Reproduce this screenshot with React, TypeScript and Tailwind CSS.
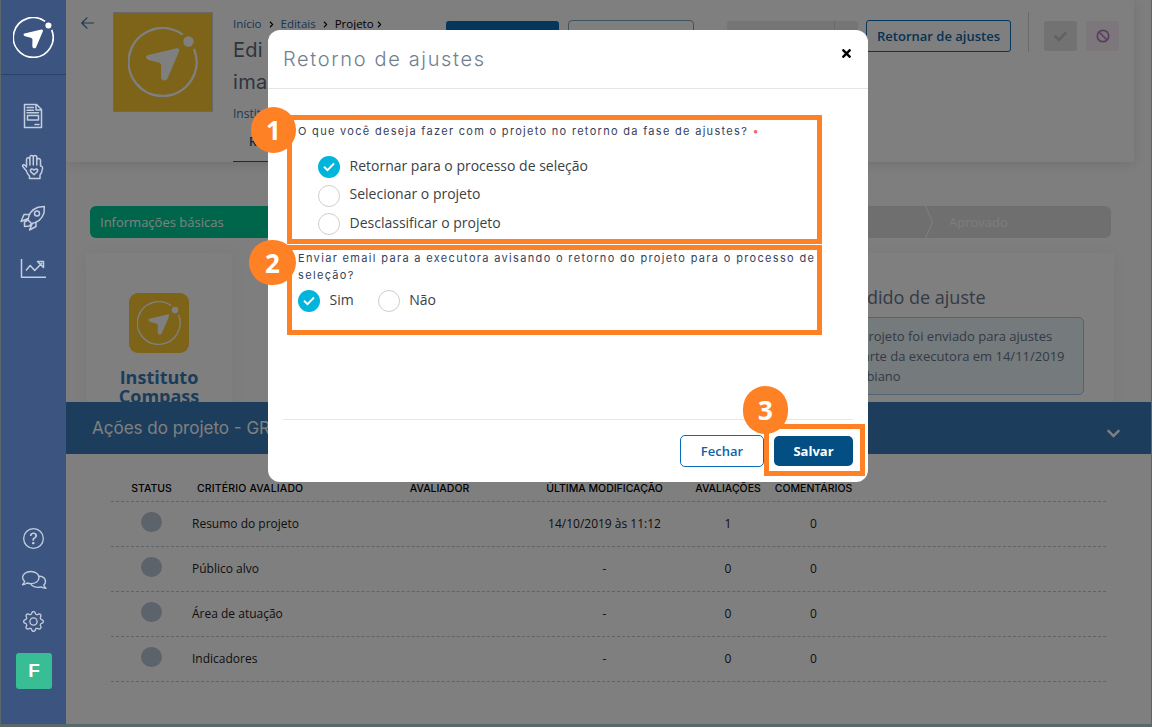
import React, { useState } from "react";
import { BsGear, BsQuestionCircle } from "react-icons/bs";
import { FaCheck, FaChevronDown, FaChevronRight, FaTimes } from "react-icons/fa";

const criteria = [
  { name: "Resumo do projeto", date: "14/10/2019 às 11:12", reviews: 1, comments: 0 },
  { name: "Público alvo", date: "-", reviews: 0, comments: 0 },
  { name: "Área de atuação", date: "-", reviews: 0, comments: 0 },
  { name: "Indicadores", date: "-", reviews: 0, comments: 0 },
];

const returnOptions = [
  "Retornar para o processo de seleção",
  "Selecionar o projeto",
  "Desclassificar o projeto",
];

const CompassLogo = ({ className, strokeWidth = 2.4 }: { className: string; strokeWidth?: number }) => (
  <svg viewBox="0 0 70 70" className={className} fill="none">
    <path d="M54.7 7.6A34 34 0 1 0 66 22" stroke="currentColor" strokeWidth={strokeWidth} />
    <circle cx="60.5" cy="14.5" r="5.2" fill="currentColor" />
    <path
      d="M19.5 28.2 48.5 21.3Q52 21 51 24.5L39.5 51.5Q38 54 35.5 53.4Q33 52.6 33 50L33.2 39Q33.3 36.4 30.5 35.6L20.5 33Q16 30 19.5 28.2Z"
      fill="currentColor"
    />
  </svg>
);

const iconProps = {
  fill: "none",
  stroke: "currentColor",
  strokeWidth: 1.5,
  strokeLinecap: "round" as const,
  strokeLinejoin: "round" as const,
};

const Sidebar = () => (
  <aside className="flex w-[65px] shrink-0 flex-col items-center bg-[#3b5580] text-[#c3cddd]">
    <div className="flex h-[75px] w-full items-center justify-center border-b border-[#29416b] pr-[3px]">
      <CompassLogo className="ml-[2px] h-[41px] w-[41px] text-white" strokeWidth={2.8} />
    </div>
    <nav className="flex flex-1 flex-col items-center pt-[28px] pr-[2px]">
      <svg viewBox="0 0 26 26" className="h-[26px] w-[26px]" {...iconProps}>
        <path d="M4.5 1.5h12l5 5v18h-17zM16 2v5h5M7 4.5h6.500M7 7.200h6.500M7 9.800h11.500M7.500 12.500h11v4.500h-11zM15 21.500h4" />
      </svg>
      <svg viewBox="0 0 26 26" className="mt-[25px] h-[26px] w-[26px]" {...iconProps}>
        <path d="M6.500 17 3 12.800Q2 11.300 3.500 10.700Q5 10.300 6.500 13V5.500Q6.700 3.700 8.200 3.700T9.900 5.500V11V3Q10 1.500 11.600 1.500T13.300 3V11V3Q13.500 1.500 15 1.500T16.800 3V11V6Q17 4.500 18.500 4.500T20.500 6V12Q22.800 12 22.500 14.500Q22 19 20 21V24.500H9.500V22Q7 20 6.500 17M14 20.800l-3.300-3.200Q9.800 16 11.500 15Q13 14.600 14 16.200Q15 14.600 16.700 15Q18.300 16 17.300 17.600z" />
      </svg>
      <svg viewBox="0 0 26 26" className="mt-[25px] h-[26px] w-[26px]" {...iconProps}>
        <path d="M8 15Q9 5.500 18 2.200L24.300 1.500 24 8Q21 17 11.500 18.500zM9 9.500H4L1 16.500 7.500 13.800M16 17V21.500L9.500 25 12.300 18.500M8 15l-3.500 2v4.500L9.500 21l2-2.500" />
        <circle cx="17" cy="8.500" r="2.500" />
      </svg>
      <svg viewBox="0 0 26 20" className="mt-[28px] h-[20px] w-[26px]" {...iconProps} strokeLinecap="butt">
        <path d="M1.500 0v18.200H26M6 11.500l4.200-5 4.500 5L22 4M17.500 2.500h6v6z" />
      </svg>
    </nav>
    <div className="flex flex-col items-center pb-[35px]">
      <BsQuestionCircle className="h-[21px] w-[21px]" />
      <svg viewBox="0 0 26 22" className="mt-[20px] h-[22px] w-[26px]" {...iconProps} strokeWidth={1.400}>
        <path d="M9.800 2.500C14.500 2.500 18 5 18 8.600S14.500 14.600 9.800 14.600C8.500 14.600 7.300 14.400 6.200 14Q4 15.600 1.500 15.700Q3.300 14 3.600 12.300C2.300 11.300 1.600 10 1.600 8.600C1.600 5 5.100 2.500 9.800 2.500ZM18 7C21.800 7.500 24.500 9.500 24.500 12.600Q24.500 14.500 22.800 16Q23.300 18 25 19.400Q22 19.200 20 17.900C15.500 19.200 11.300 17.700 9.700 14.800" />
      </svg>
      <BsGear className="mt-[20px] h-[21px] w-[21px]" />
      <div className="mt-[21px] mr-[-1px] flex h-9 w-9 items-center justify-center rounded-[3px] bg-[#39bd95] font-['Liberation_Sans'] text-[19px] font-bold text-white">
        F
      </div>
    </div>
  </aside>
);

const ProjectHeader = () => (
  <header className="flex h-[162px] w-[1068px] bg-white pl-[15px] pr-[15px] shadow-[0_2px_12px_rgba(0,0,0,0.12)]">
    <svg viewBox="0 0 13 12" className="mt-[17px] h-3 w-[13px] text-[#3a6ea8]" {...iconProps} strokeWidth={1.200}>
      <path d="M12.500 6H.8M6 .8.800 6 6 11.200" />
    </svg>
    <div className="mt-3 ml-[19px] flex h-[100px] w-[100px] shrink-0 items-center justify-center border border-[#d0d0d0] bg-[#fac832] text-white">
      <CompassLogo className="h-[70px] w-[70px]" />
    </div>
    <div className="ml-5 flex w-[213px] flex-col">
      <div className="mt-[16px] flex h-4 items-center gap-[7px] whitespace-nowrap text-[11.500px] text-[#2b6cb0]">
        <span>Início</span>
        <FaChevronRight className="h-[7px] w-[5px] text-black" />
        <span>Editais</span>
        <FaChevronRight className="h-[7px] w-[5px] text-black" />
        <span className="-mr-[4px] text-black">Projeto</span>
        <FaChevronRight className="h-[7px] w-[5px] text-black" />
      </div>
      <h1 className="mt-[2px] font-['Inter'] text-[20px] leading-8 tracking-[0.300px] text-[#5c6a80]">
        Edi
        <br />
        ima
      </h1>
      <p className="mt-[8px] text-[12px] leading-4 text-[#47729f]">Instit</p>
      <div className="mt-auto h-[30px] w-24 border-b border-[#0a64ad] pt-px pl-4 text-[12px] font-semibold text-[#0a5490]">
        R
      </div>
    </div>
    <div className="flex flex-1 items-start">
      <span className="mt-[21px] h-[30px] w-[113px] rounded-[3px] bg-[#0a6cb8]" />
      <span className="mt-5 ml-[9px] h-8 w-[126px] rounded-[4px] border border-[#7fa5bf]" />
      <span className="mt-[21px] ml-[33px] flex h-[30px] w-[131px] justify-end rounded-[3px] bg-[#eaeaea]">
        <span className="w-6 border-l border-[#d5d5d5]" />
      </span>
      <button className="mt-5 ml-2 h-8 w-[145px] rounded-[3px] border border-[#0a6cb8] pt-px text-[13px] font-semibold whitespace-nowrap text-[#0a64a8]">
        Retornar de ajustes
      </button>
      <span className="mt-3 ml-[17px] h-10 border-l border-[#d3d3dd]" />
      <span className="mt-[21px] ml-[15px] flex h-[30px] w-[33px] items-center justify-center rounded-[3px] bg-[#e4e4e4]">
        <FaCheck className="h-[13px] w-[13px] text-[#c4c4c4]" />
      </span>
      <span className="mt-[21px] ml-[9px] flex h-[30px] w-[33px] items-center justify-center rounded-[3px] bg-[#f6eff7] text-[#b57cc0]">
        <svg viewBox="0 0 14 14" className="h-[14px] w-[14px]" fill="none" stroke="currentColor" strokeWidth="1.700">
          <circle cx="7" cy="7" r="5.700" />
          <path d="M3 3l8 8" />
        </svg>
      </span>
    </div>
  </header>
);

const Stepper = () => (
  <div className="mt-11 ml-6 flex h-8 w-[1021px] overflow-hidden rounded-[6px] bg-[#dfdfdf] text-[13px] leading-8">
    <div className="w-[255px] bg-[#00cc96] pl-[10px] text-white">Informações básicas</div>
    <div className="flex-1" />
    <svg viewBox="0 0 8 32" className="h-8 w-2" fill="none" stroke="#fff">
      <path d="M.5 0l7 16-7 16" />
    </svg>
    <div className="w-[178px] pl-4 text-white/80">Aprovado</div>
  </div>
);

const Cards = () => (
  <div className="mt-[15px] flex justify-between pr-[37px] pl-5">
    <div className="flex h-[200px] w-[146px] flex-col items-center bg-[#fefefe] pt-10 shadow-[0_0_22px_rgba(0,0,0,0.05)]">
      <div className="flex h-[60px] w-[60px] items-center justify-center rounded-[9px] bg-[#fac832] text-white">
        <CompassLogo className="h-[44px] w-[44px]" strokeWidth={2.200} />
      </div>
      <p className="mt-[15px] text-center text-[18px] leading-[19px] font-bold text-[#367bb8]">
        Instituto
        <br />
        Compass
      </p>
    </div>
    <div className="h-[200px] w-[300px] bg-[#fefefe] pt-[32px] pr-[30px] shadow-[0_0_22px_rgba(0,0,0,0.05)]">
      <h2 className="pl-[32px] text-[18px] leading-[25px] text-[#68768c]">Pedido de ajuste</h2>
      <div className="mt-[7px] h-[78px] rounded-[5px] border border-[#a9c4ee] bg-[#eaf5f8] pt-[8px] text-[13px] leading-5 whitespace-nowrap text-[#68768c]">
        <p className="pl-[32px]">O projeto foi enviado para ajustes</p>
        <p className="pl-[15px]">por parte da executora em 14/11/2019</p>
        <p className="pl-[13px]">por Fabiano</p>
      </div>
    </div>
  </div>
);

const columns = "grid grid-cols-[81px_165px_165px_165px_82px_89px_1fr] items-center border-b border-dashed border-[#b7cad0] text-center";

const ActionsPanel = () => (
  <section className="relative h-[322px] bg-white">
    <div className="flex h-[52px] items-center justify-between bg-[#387ab8] pr-[30px] pl-[26px] text-white">
      <h2 className="pt-px font-['Inter'] text-[17px]">Ações do projeto - GR</h2>
      <FaChevronDown className="mt-[10px] h-[15px] w-[15px]" />
    </div>
    <div className="ml-[45px] w-[995px] text-[12px] text-[#222]">
      <div className={`${columns} h-12 pt-[22px] font-['Inter'] text-[10.500px] font-medium whitespace-nowrap text-black`}>
        <span>STATUS</span>
        <span className="pl-[5px] text-left tracking-[0.150px]">CRITÉRIO AVALIADO</span>
        <span>AVALIADOR</span>
        <span>ÚLTIMA MODIFICAÇÃO</span>
        <span>AVALIAÇÕES</span>
        <span>COMENTÁRIOS</span>
      </div>
      {criteria.map((c) => (
        <div key={c.name} className={`${columns} h-[45px]`}>
          <span className="mx-auto mb-[5px] h-5 w-[21px] rounded-full bg-[#b9c7d6]" />
          <span className="text-left">{c.name}</span>
          <span />
          <span>{c.date}</span>
          <span>{c.reviews}</span>
          <span>{c.comments}</span>
        </div>
      ))}
    </div>
  </section>
);

const Radio = ({
  label,
  checked,
  onSelect,
}: {
  label: string;
  checked: boolean;
  onSelect: () => void;
}) => (
  <button onClick={onSelect} className="flex h-[22px] items-center text-left">
    {checked ? (
      <span className="flex h-[22px] w-[22px] items-center justify-center rounded-full bg-[#00b5dc] text-white">
        <svg viewBox="0 0 12 10" className="h-[10px] w-3" fill="none" stroke="currentColor" strokeWidth="1.900">
          <path d="M1 4.800 4.500 8.200 11 1.500" />
        </svg>
      </span>
    ) : (
      <span className="h-[22px] w-[22px] rounded-full border border-[#cfcfc9] bg-white" />
    )}
    <span className="-mt-[3px] pl-[9.500px] text-[14px] leading-5 text-[#3b3f46]">{label}</span>
  </button>
);

const Marker = ({ number, className }: { number: number; className: string }) => (
  <span
    className={`absolute flex items-center justify-center rounded-full bg-[#ff8126] text-[26px] leading-none font-bold text-white ${className}`}
  >
    {number}
  </span>
);

const ReturnModal = () => {
  const [option, setOption] = useState(returnOptions[0]);
  const [sendEmail, setSendEmail] = useState(true);

  return (
    <div className="absolute top-[30px] left-[268px] flex h-[452px] w-[600px] flex-col rounded-xl bg-white">
      <div className="flex h-[59px] items-center justify-between border-b border-[#e5e5e5] pr-[15px] pl-[15px]">
        <h2 className="font-['Inter'] text-[20px] font-light tracking-[1.650px] text-[#6f8090]">
          Retorno de ajustes
        </h2>
        <FaTimes className="mt-[-12px] h-[13px] w-[13px] text-black" />
      </div>

      <div className="mt-[26px] ml-[19px] h-[129px] w-[535px] border-[5px] border-[#ff8126] pt-[3px] pl-[5px]">
        <p className="pl-px font-['Inter'] text-[11px] leading-4 tracking-[1.300px] whitespace-nowrap text-[#36425a]">
          O que você deseja fazer com o projeto no retorno da fase de ajustes?{" "}
          <span className="text-[#f06a6a]">•</span>
        </p>
        <div className="mt-[17px] ml-[21px] flex flex-col gap-[6.500px]">
          {returnOptions.map((o) => (
            <Radio key={o} label={o} checked={option === o} onSelect={() => setOption(o)} />
          ))}
        </div>
      </div>

      <div className="mt-px ml-[19px] h-[90px] w-[535px] border-[5px] border-[#ff8126] pl-[5px]">
        <p className="pl-px font-['Inter'] text-[11px] leading-[17px] tracking-[1.335px] whitespace-nowrap text-[#36425a]">
          Enviar email para a executora avisando o retorno do projeto para o processo de
          <br />
          seleção?
        </p>
        <div className="mt-[6px] ml-px flex gap-[24px]">
          <Radio label="Sim" checked={sendEmail} onSelect={() => setSendEmail(true)} />
          <Radio label="Não" checked={!sendEmail} onSelect={() => setSendEmail(false)} />
        </div>
      </div>

      <div className="mx-[15px] mt-auto flex h-[63px] justify-end border-t border-[#dce8f6]">
        <button className="mt-[15px] h-8 w-[84px] rounded-[5px] border border-[#0a6cb8] pt-[2px] text-[13px] font-semibold text-[#0a64ad]">
          Fechar
        </button>
        <div className="-mr-3 mt-1 h-[52px] w-[101px] border-[5px] border-[#ff8126] p-[5px] pt-[7px]">
          <button className="h-[30px] w-[79px] rounded-[5px] bg-[#034f84] pt-[2px] text-[13px] font-bold text-white">
            Salvar
          </button>
        </div>
      </div>

      <Marker number={1} className="top-[77px] -left-[17px] h-[46px] w-[45px]" />
      <Marker number={2} className="top-[210px] -left-[19px] h-[45px] w-[47px]" />
      <Marker number={3} className="top-[356px] left-[475px] h-[48px] w-[45px]" />
    </div>
  );
};

export default function App() {
  return (
    <div className="relative flex h-[727px] w-[1152px] overflow-hidden border-r border-b-[3px] border-l border-[#5b686b] font-['Open_Sans',sans-serif]">
      <Sidebar />
      <main className="relative w-[1085px] shrink-0 overflow-hidden bg-[#fdfdfd]">
        <div className="h-[402px] overflow-hidden">
          <ProjectHeader />
          <Stepper />
          <Cards />
        </div>
        <ActionsPanel />
        <div className="absolute inset-0 bg-black/50" />
      </main>
      <div className="absolute inset-y-0 -left-px">
        <ReturnModal />
      </div>
    </div>
  );
}
